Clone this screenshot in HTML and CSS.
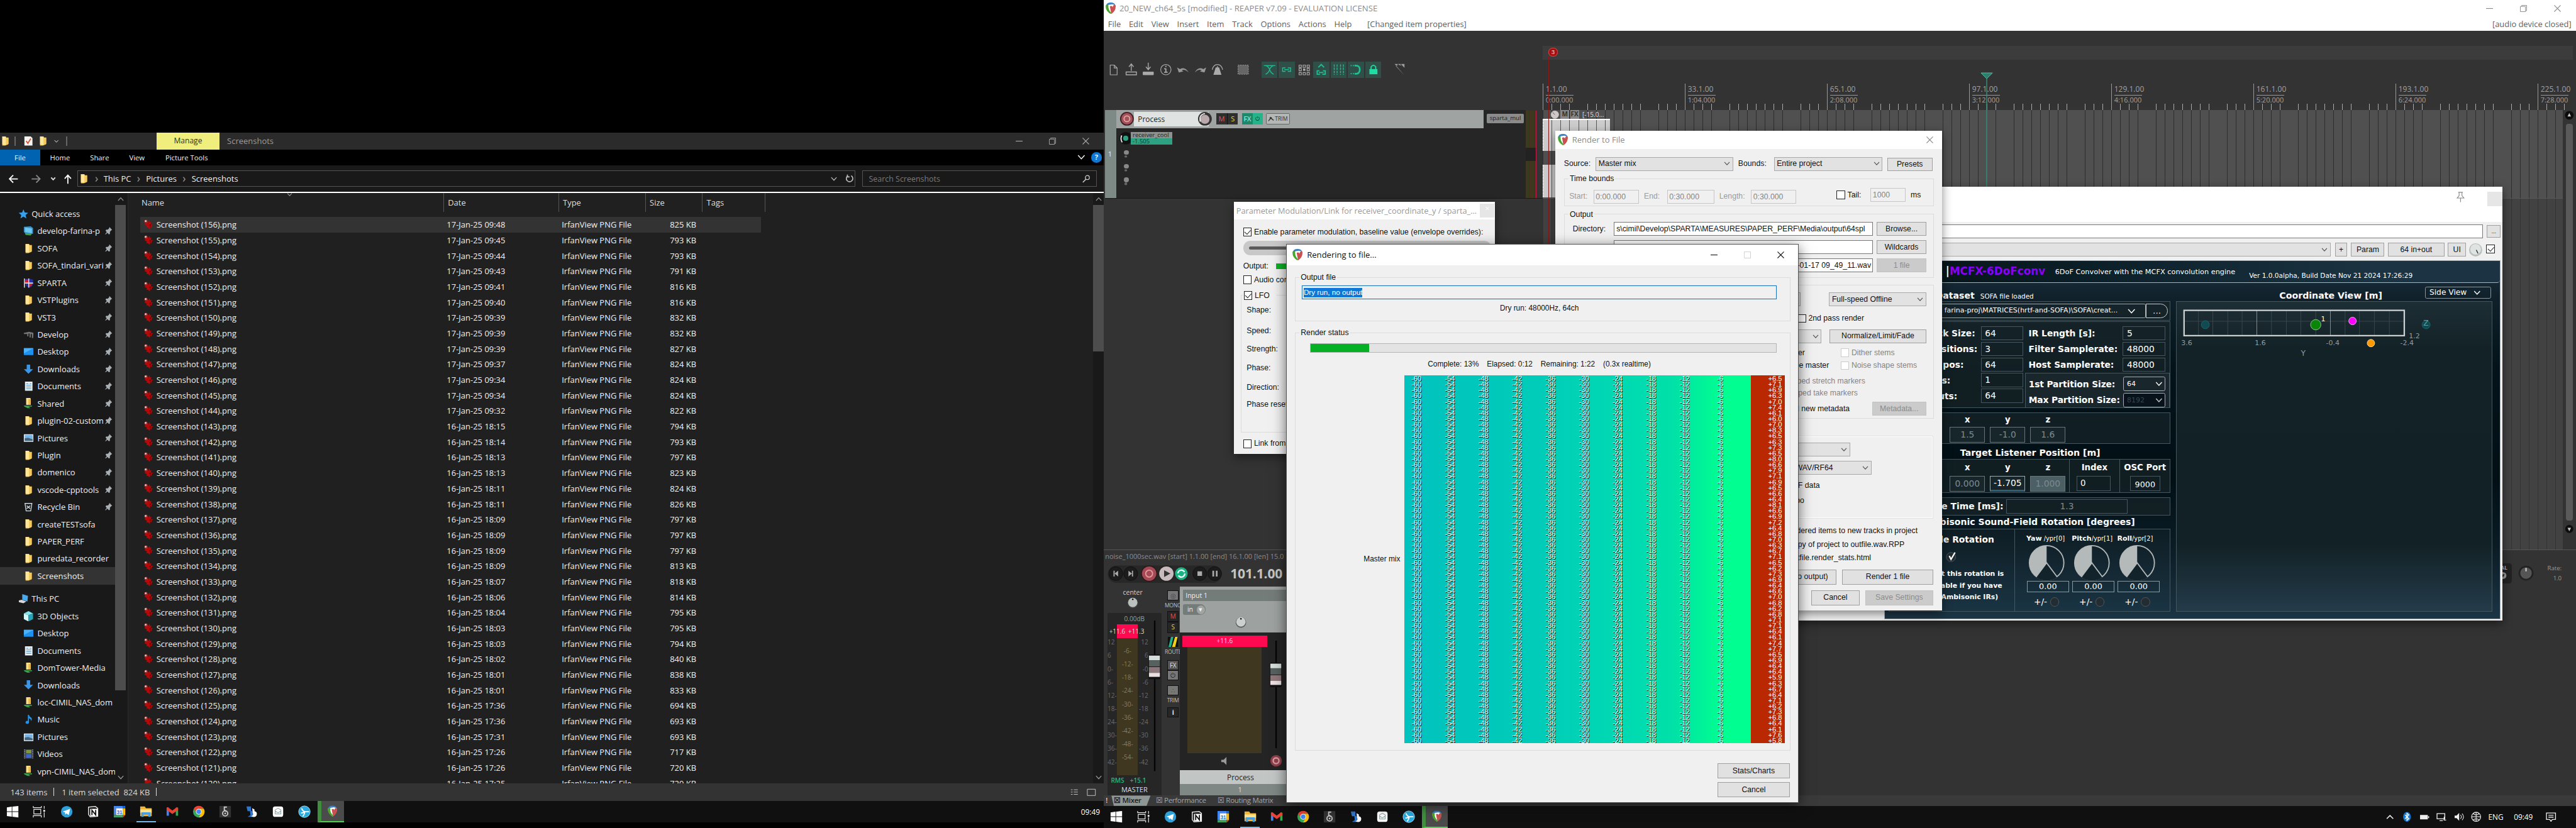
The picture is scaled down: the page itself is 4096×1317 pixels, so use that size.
FILE: index.html
```html
<!DOCTYPE html>
<html lang="en">
<head>
<meta charset="utf-8">
<title>Desktop</title>
<link rel="stylesheet" href="styles.css">
</head>
<body>
<svg class="sprite" width="0" height="0">
  <symbol id="reaper" viewBox="0 0 20 20"><path fill="#fff" d="M2 5Q10-3 18 5Q19 13 10 20Q1 13 2 5Z"/><path fill="#3b82c4" d="M1.500 6Q3 0 10 0Q17 0 18.500 6Q14 1.500 9.500 3.500Q5.500 3 4 7Z"/><path fill="#4aa52e" d="M1.500 5Q0 14 10 20L11 18Q5 12 6 5Q3 3 1.500 5Z"/><path fill="#c9504f" d="M18.500 5Q19.500 14 11 20L8.500 6.500Q13 5 13.500 8.500Q14 3 18.500 5Z"/></symbol>
  <symbol id="folder" viewBox="0 0 18 18"><path fill="#f5c95a" d="M4 1h6l1 2h4v11l-1 1-5 2H4z"/><path fill="#ffe69a" d="M4 1l6 1v14l-6-1z"/></symbol>
  <symbol id="netfolder" viewBox="0 0 18 18"><path fill="#ffe08a" d="M5 0h7l1 1v11H5z"/><path fill="#e8b84c" d="M9 2h4v10H9z"/><path fill="#38a149" d="M1 13h14v2H9l4 3H8l-6-3z"/></symbol>
  <symbol id="irfan" viewBox="0 0 18 18"><path fill="#b50808" d="M5 3L9 5 10 1 12 5 14 4 13 8 17 9 14 11 15 14 12 13 11 17 8 14 5 14 6 11 2 9z"/><path fill="#7a0404" d="M10 9l4-1-2 5z"/><circle cx="4.500" cy="3.500" r="3" fill="#a52a2a"/><circle cx="4" cy="3" r="1.500" fill="#ddd"/></symbol>
  <symbol id="star" viewBox="0 0 18 18"><path fill="#37a2ea" d="M9 1l2.300 5.700 6 .4-4.600 3.900 1.500 6L9 13.800 3.800 17l1.500-6L.7 7.100l6-.4z"/></symbol>
  <symbol id="desk" viewBox="0 0 18 18"><path fill="#1e90ee" d="M1 3h17v12H1z"/><path fill="#4cb1fa" d="M1 3h17L1 12z"/></symbol>
  <symbol id="down" viewBox="0 0 18 18"><path fill="#3a96e8" d="M6 1h6v8h5l-8 8-8-8h5z"/></symbol>
  <symbol id="doc" viewBox="0 0 18 18"><path fill="#eef3f7" d="M3 1h13v16H3z"/><path stroke="#3683b7" d="M5 4.500h4M5 7.500h9M5 10.500h9M5 13.500h9M11 4.500h3"/></symbol>
  <symbol id="check" viewBox="0 0 18 18"><path fill="#f4f4f4" d="M2 1h11l3 3v13H2z"/><path fill="none" stroke="#d2542c" stroke-width="2" d="M5 9l3 4 5-8"/></symbol>
  <symbol id="music" viewBox="0 0 18 18"><path fill="#1e96f0" d="M8 1h2q0 3 4 5 2 3-.5 6 0-4-3.500-5v7a3 2.500 0 1 1-2-2.200z"/></symbol>
  <symbol id="pics" viewBox="0 0 18 18"><path fill="#e9eef2" d="M1 3h17v13H1z"/><path fill="#79b6e6" d="M2.500 4.500h14v10h-14z"/><path fill="#42647b" d="M2.500 10l6-1 8 3v2.500h-14z"/></symbol>
  <symbol id="video" viewBox="0 0 18 18"><path fill="#3b3f4a" d="M1 1h17v16H1z"/><path fill="#7f9a35" d="M5 2h9v6H5z"/><path fill="#3d66c4" d="M5 9h9v7H5z"/><path stroke="#aaa" stroke-width="1.500" stroke-dasharray="1.500 1.500" d="M2.500 1v16M16.500 1v16"/></symbol>
  <symbol id="pc" viewBox="0 0 18 18"><path fill="#4aa9ec" d="M7 1l10 3-1 10-9-3z"/><path fill="#d9d9d9" d="M1 12l5-1 8 3-5 3-8-2z"/></symbol>
  <symbol id="cube" viewBox="0 0 18 18"><path fill="#7fe6ef" d="M9 0l8 4-8 3-8-3z"/><path fill="#d5f7f8" d="M1 4l8 3v11l-8-4z"/><path fill="#27a5b8" d="M17 4L9 7v11l8-4z"/></symbol>
  <symbol id="pcnet" viewBox="0 0 18 18"><path fill="#3a93c9" d="M1 2l12-1 4 3v10l-12 1-4-4z"/><path fill="#6cc7f3" d="M3 3l12 2v8L3 11z"/><path fill="#39a64a" d="M3 13l12 1-2 3-9-1z"/></symbol>
  <symbol id="shield" viewBox="0 0 18 18"><path fill="#2330a8" d="M3 2l7-1 7 2v8q-2 5-7 6-6-2-6-7z"/><path fill="#c23" d="M4 3h5v6H3zM10 9h6l-2 5-4 2z"/><path stroke="#eee" stroke-width="1.500" fill="none" d="M2 1v16M9.500 1v16M3 9h14"/></symbol>
  <symbol id="gear" viewBox="0 0 18 18"><path fill="#777" d="M1 6l9-2 8 2-1 9h-2V8h-2v6h-2V7h-2v5H7V8H1z"/></symbol>
  <symbol id="bin" viewBox="0 0 18 18"><path fill="none" stroke="#cfd8de" stroke-width="1.500" d="M3 3h12l-2 13H5zM6 7l6 5M12 7l-6 5"/></symbol>
  <symbol id="chev" viewBox="0 0 12 8"><path fill="none" stroke="currentColor" stroke-width="1.500" d="M1 1l5 5.500L11 1"/></symbol>
  <symbol id="cross" viewBox="0 0 12 12"><path stroke="currentColor" stroke-width="1.200" d="M.5.5l11 11M11.500.5l-11 11"/></symbol>
  <symbol id="mini" viewBox="0 0 12 12"><path stroke="currentColor" stroke-width="1.200" d="M0 6h12"/></symbol>
  <symbol id="rest" viewBox="0 0 12 12"><path stroke="currentColor" fill="none" d="M.5 2.500h9v9h-9zM3 2V.5h8.500V10H10"/></symbol>
  <symbol id="maxi" viewBox="0 0 12 12"><path stroke="currentColor" fill="none" d="M.5.5h11v11H.5z"/></symbol>
  <symbol id="t-win" viewBox="0 0 22 22"><path fill="#fff" d="M1 3.500L9.500 2.300V10.500H1zM10.500 2.200L21 1v9.500H10.500zM1 11.500h8.500v8.200L1 18.500zM10.500 11.500H21V21l-10.500-1.200z"/></symbol>
  <symbol id="t-task" viewBox="0 0 22 22"><path fill="none" stroke="#e8e8e8" stroke-width="1.300" d="M1 1v3h14V1M2 7h12v8H2zM1 21v-3h14v3M20 1v5M20 12v9"/><path fill="#fff" d="M18.500 8h3v3h-3z"/></symbol>
  <symbol id="t-tele" viewBox="0 0 22 22"><circle cx="11" cy="11" r="10" fill="#2ea0db"/><path fill="#fff" d="M4 11l13-5-2.500 11-4-3-2 2-.5-4z"/></symbol>
  <symbol id="t-notion" viewBox="0 0 22 22"><path fill="#111" stroke="#ddd" stroke-width="1.600" d="M3 3l12-1 4 3v14l-13 1-3-4z"/><path fill="#fff" d="M6 6h13v13H6z"/><path stroke="#111" fill="none" stroke-width="2" d="M9 17V8.500l6.500 8V8"/></symbol>
  <symbol id="t-cal" viewBox="0 0 22 22"><path fill="#4285f4" d="M1 1h16v4H5v12H1z"/><path fill="#fff" d="M5 5h12v12H5z"/><path fill="#fbbc04" d="M17 5h4v12h-4z"/><path fill="#1967d2" d="M17 1h4v4h-4z"/><path fill="#34a853" d="M1 17h16v4H1z"/><path fill="#ea4335" d="M17 17h4l-4 4z"/><text x="11" y="15" text-anchor="middle" class="cal-n">31</text></symbol>
  <symbol id="t-exp" viewBox="0 0 22 22"><path fill="#f2b632" d="M1 2h8l2 3h10v14H1z"/><path fill="#ffe08a" d="M1 7h20v6H1z"/><path fill="#4a9fe0" d="M3 12h16v8h-4v-4H7v4H3z"/></symbol>
  <symbol id="t-gmail" viewBox="0 0 22 22"><path fill="#4285f4" d="M1 4h4v14H1z"/><path fill="#34a853" d="M17 4h4v14h-4z"/><path fill="#ea4335" d="M1 4l2-1 8 6 8-6 2 2v3l-10 7L1 8z"/></symbol>
  <symbol id="t-chrome" viewBox="0 0 22 22"><circle cx="11" cy="11" r="10" fill="#34a853"/><path fill="#ea4335" d="M2.300 6A10 10 0 0 1 19.700 6H11L7 13.500z"/><path fill="#fbbc04" d="M19.700 6A10 10 0 0 1 11 21l4.300-7.500L13 6z"/><circle cx="11" cy="11" r="5" fill="#fff"/><circle cx="11" cy="11" r="4" fill="#4285f4"/></symbol>
  <symbol id="t-eight" viewBox="0 0 22 22"><path fill="#333" d="M1 1h20v20H1z"/><circle cx="11" cy="14" r="4.500" fill="none" stroke="#c9c9c9" stroke-width="2"/><circle cx="11" cy="14" r="1.500" fill="#c9c9c9"/><path stroke="#c9c9c9" stroke-width="2" fill="none" d="M14 3H9.500v5l4 3"/></symbol>
  <symbol id="t-hand" viewBox="0 0 22 22"><path fill="#2e77d0" d="M2 2h8v8H4zM8 8l5 3v9H4l5-3z"/><path fill="#fff" d="M12 5l4 2v3q5 1 4 6-1 5-7 4l-3-1q5-2 3-6z"/></symbol>
  <symbol id="t-box" viewBox="0 0 22 22"><rect x="2" y="2" width="18" height="18" rx="4" fill="#fff"/><path fill="none" stroke="#9aa" stroke-width="1.300" d="M11 5l5 3v7H6V8zM6 10l5 3 5-3"/></symbol>
  <symbol id="t-wave" viewBox="0 0 22 22"><circle cx="11" cy="11" r="10" fill="#29abe2"/><path fill="none" stroke="#fff" stroke-width="2" d="M6 5q2 5 5.500 6H19M11.500 11q0 5-3.500 8M5 13q3 1 6.500-2"/><circle cx="11" cy="11" r="10" fill="none" stroke="#b7e4f7"/></symbol>
  <g id="yprdial"><circle r="30" fill="none" stroke="#b4b9b9" stroke-width="2"/><path fill="#b4b9b9" d="M0 0V-30A30 30 0 0 0-18 24z"/><path fill="#12232c" d="M0 0L-18 25.500A31.500 31.500 0 0 0 18 25.500z"/><path stroke="#b4b9b9" stroke-width="2" fill="none" d="M-18 24L0 0L18 24"/></g>
  <g id="fadercap"><rect x="0" y="0" width="21" height="43" rx="3" fill="#111"/><rect x="1" y="2" width="19" height="8" fill="#d5dddb"/><rect x="1" y="10" width="19" height="11" fill="#56605e"/><rect x="1" y="22" width="19" height="10" fill="#8e777b"/><rect x="1" y="32" width="19" height="7" fill="#eadfe1"/></g>
</svg>

<main class="desktop">
  <!-- File explorer -->
  <section class="explorer">
    <header class="ex-title">
      <div class="ex-quick"><svg class="i18"><use href="#folder"/></svg><i></i><svg class="i18"><use href="#check"/></svg><svg class="i18"><use href="#folder"/></svg><svg class="i8"><use href="#chev"/></svg><i></i></div>
      <div class="ex-manage">Manage</div><div class="ex-name">Screenshots</div>
      <div class="ex-ctl"><svg><use href="#mini"/></svg><svg><use href="#rest"/></svg><svg><use href="#cross"/></svg></div>
    </header>
    <nav class="ex-tabs"><b>File</b><span>Home</span><span>Share</span><span>View</span><span class="pt">Picture Tools</span><em><svg><use href="#chev"/></svg><u>?</u></em></nav>
    <div class="ex-addr">
      <svg class="arrows" viewBox="0 0 134 45"><g fill="none" stroke-width="2"><path stroke="#fff" d="M31 22.500H17M23 16l-6.500 6.500L23 29"/><path stroke="#888" d="M55 22.500h14M63 16l6.500 6.500L63 29"/><path stroke="#ddd" d="M89 20l3.500 4 3.500-4"/><path stroke="#fff" d="M118 31V16M112.500 22l5.500-6 5.500 6"/></g></svg>
      <div class="crumbs"><svg class="i18"><use href="#folder"/></svg><s>›</s>This PC<s>›</s>Pictures<s>›</s>Screenshots<span class="cr-end"><svg class="cv"><use href="#chev"/></svg><svg class="rf" viewBox="0 0 16 16"><path fill="none" stroke="#bbb" stroke-width="2" d="M5 3a6 6 0 1 0 6 0M4 1v4h4"/></svg></span></div>
      <div class="search">Search Screenshots<svg viewBox="0 0 16 16"><circle cx="10" cy="5.500" r="4" fill="none" stroke="#ccc" stroke-width="1.600"/><path stroke="#ccc" stroke-width="2" d="M7 9l-6 6"/></svg></div>
    </div>
    <div class="ex-body">
      <aside class="ex-side">
        <ul class="tree">
          <li class="top"><svg><use href="#star"/></svg>Quick access</li>
          <li class="p"><svg><use href="#pcnet"/></svg>develop-farina-p</li>
          <li class="p"><svg><use href="#folder"/></svg>SOFA</li>
          <li class="p"><svg><use href="#folder"/></svg>SOFA_tindari_vari</li>
          <li class="p"><svg><use href="#shield"/></svg>SPARTA</li>
          <li class="p"><svg><use href="#folder"/></svg>VSTPlugins</li>
          <li class="p"><svg><use href="#folder"/></svg>VST3</li>
          <li class="p"><svg><use href="#gear"/></svg>Develop</li>
          <li class="p"><svg><use href="#desk"/></svg>Desktop</li>
          <li class="p"><svg><use href="#down"/></svg>Downloads</li>
          <li class="p"><svg><use href="#doc"/></svg>Documents</li>
          <li class="p"><svg><use href="#netfolder"/></svg>Shared</li>
          <li class="p"><svg><use href="#folder"/></svg>plugin-02-custom</li>
          <li class="p"><svg><use href="#pics"/></svg>Pictures</li>
          <li class="p"><svg><use href="#folder"/></svg>Plugin</li>
          <li class="p"><svg><use href="#folder"/></svg>domenico</li>
          <li class="p"><svg><use href="#folder"/></svg>vscode-cpptools</li>
          <li class="p"><svg><use href="#bin"/></svg>Recycle Bin</li>
          <li><svg><use href="#folder"/></svg>createTESTsofa</li>
          <li><svg><use href="#folder"/></svg>PAPER_PERF</li>
          <li><svg><use href="#folder"/></svg>puredata_recorder</li>
          <li class="sel"><svg><use href="#folder"/></svg>Screenshots</li>
          <li class="top pc"><svg><use href="#pc"/></svg>This PC</li>
          <li><svg><use href="#cube"/></svg>3D Objects</li>
          <li><svg><use href="#desk"/></svg>Desktop</li>
          <li><svg><use href="#doc"/></svg>Documents</li>
          <li><svg><use href="#netfolder"/></svg>DomTower-Media</li>
          <li><svg><use href="#down"/></svg>Downloads</li>
          <li><svg><use href="#netfolder"/></svg>loc-CIMIL_NAS_dom</li>
          <li><svg><use href="#music"/></svg>Music</li>
          <li><svg><use href="#pics"/></svg>Pictures</li>
          <li><svg><use href="#video"/></svg>Videos</li>
          <li><svg><use href="#netfolder"/></svg>vpn-CIMIL_NAS_dom</li>
        </ul>
        <div class="vbar"><svg class="up"><use href="#chev"/></svg><div class="thumb"></div><svg><use href="#chev"/></svg></div>
      </aside>
      <div class="files">
        <div class="cols"><span>Name</span><span>Date</span><span>Type</span><span>Size</span><span>Tags</span><svg><use href="#chev"/></svg></div>
        <div id="rows"></div>
      </div>
      <div class="vbar right"><svg class="up"><use href="#chev"/></svg><div class="thumb"></div><svg><use href="#chev"/></svg></div>
    </div>
    <footer class="ex-status"><span>143 items</span><i></i><span>1 item selected&nbsp; 824 KB</span><i></i><div><svg viewBox="0 0 16 16"><path stroke="#ccc" d="M2 3.500h3M7 3.500h7M2 7.500h3M7 7.500h7M2 11.500h3M7 11.500h7"/></svg><svg viewBox="0 0 16 16"><path fill="none" stroke="#ccc" d="M1 2.500h14v11H1z"/></svg></div></footer>
  </section>
  <div class="taskbar left">
    <svg><use href="#t-win"/></svg><svg><use href="#t-task"/></svg><svg><use href="#t-tele"/></svg><svg><use href="#t-notion"/></svg><svg><use href="#t-cal"/></svg><span class="open"><svg><use href="#t-exp"/></svg></span><svg><use href="#t-gmail"/></svg><svg><use href="#t-chrome"/></svg><svg><use href="#t-eight"/></svg><svg><use href="#t-hand"/></svg><svg><use href="#t-box"/></svg><svg><use href="#t-wave"/></svg><span class="act"><svg><use href="#reaper"/></svg></span>
    <div class="tray">09:49</div>
  </div>

  <!-- REAPER main window -->
  <section class="daw">
    <header class="daw-title"><svg class="i20"><use href="#reaper"/></svg><span>20_NEW_ch64_5s [modified] - REAPER v7.09 - EVALUATION LICENSE</span><div class="daw-ctl"><svg><use href="#mini"/></svg><svg><use href="#rest"/></svg><svg><use href="#cross"/></svg></div></header>
    <nav class="daw-menu"><span>File</span><span>Edit</span><span>View</span><span>Insert</span><span>Item</span><span>Track</span><span>Options</span><span>Actions</span><span>Help</span><span class="chg">[Changed item properties]</span><span class="aud">[audio device closed]</span></nav>
    <div class="daw-main">
      <div class="tcp">
        <div class="tools">
          <svg viewBox="0 0 28 28"><path fill="none" stroke="#aaa" stroke-width="1.300" d="M8 6h7l5 5v12H8zM15 6v5h5"/></svg>
          <svg viewBox="0 0 28 28"><path fill="none" stroke="#aaa" stroke-width="1.500" d="M5 18h18v5H5zM14 16V5M10 9l4-5 4 5"/></svg>
          <svg viewBox="0 0 28 28"><path fill="#aaa" stroke="#aaa" d="M5 18h18v5H5z"/><path fill="none" stroke="#aaa" stroke-width="1.500" d="M14 2v11M10 9l4 5 4-5"/></svg>
          <svg viewBox="0 0 28 28"><circle cx="14" cy="14" r="9" fill="none" stroke="#aaa" stroke-width="1.300"/><path stroke="#aaa" stroke-width="2" d="M14 12v6M11 12.500h3M11 18.500h6M13 8.500h2"/></svg>
          <svg viewBox="0 0 28 28"><path fill="#999" d="M4 10l3 9 8-2-3-2q5-3 12 4-6-11-15-6z"/></svg>
          <svg viewBox="0 0 28 28"><path fill="#999" d="M24 10l-3 9-8-2 3-2q-5-3-12 4 6-11 15-6z"/></svg>
          <svg viewBox="0 0 28 28"><path fill="none" stroke="#aaa" stroke-width="1.500" d="M5 14q2-9 9-9t9 9M14 8v8"/><path fill="#aaa" d="M11 10h6l4 13H7z"/></svg>
          <svg class="g1" viewBox="0 0 28 28"><path fill="#666" stroke="#aaa" stroke-dasharray="2 2" d="M5 6h18v16H5z"/></svg>
          <svg class="on g2" viewBox="0 0 28 28"><path fill="none" stroke="#1fbf93" stroke-width="1.400" d="M4 7h20M7 22q5-2 7-8t7-7M21 22q-5-2-7-8T7 7"/></svg>
          <svg class="on" viewBox="0 0 28 28"><path fill="none" stroke="#1fbf93" stroke-width="1.500" d="M12 11H7v6h5M16 11h5v6h-5M10 14h8"/></svg>
          <svg viewBox="0 0 28 28"><g fill="none" stroke="#aaa" stroke-width="1.300"><path d="M5 6h4v4H5zM12 6h4v4h-4zM19 6h4v4h-4zM5 12h4v4H5zM19 12h4v4h-4zM5 19h4v4H5zM12 19h4v4h-4zM19 19h4v4h-4z"/></g><path fill="#aaa" d="M12 12h4v4h-4z"/></svg>
          <svg class="on" viewBox="0 0 28 28"><path fill="none" stroke="#1fbf93" stroke-width="2" d="M9 10l5-5 5 5M11 16H7v6h5M17 16h4v6h-5M10 19h8"/></svg>
          <svg class="on" viewBox="0 0 28 28"><path stroke="#1fbf93" stroke-width="1.500" stroke-dasharray="4 1.500" d="M6 5v18M11 5v18M17 5v18M22 5v18"/></svg>
          <svg class="on" viewBox="0 0 28 28"><path fill="none" stroke="#1fbf93" stroke-width="3" d="M12 7q9-1 9 7t-9 7"/><path stroke="#1fbf93" stroke-width="2" stroke-dasharray="2 2" d="M5 7h6M5 21h6"/></svg>
          <svg class="on" viewBox="0 0 28 28"><path fill="#1fdca5" d="M7 13h14v9H7z"/><path fill="none" stroke="#1fdca5" stroke-width="2" d="M10 13V9q4-5 8 0v4"/></svg>
          <svg class="g3" viewBox="0 0 28 28"><path fill="#aaa" d="M3 4h18v4zM6 8l15 16V11L12 4zM21 4v20L4 4z" opacity=".9"/><path stroke="#333" stroke-width="1.200" d="M9 4l12 14M14 4l7 8"/></svg>
        </div>
        <div class="track">
          <div class="t-strip">1</div>
          <div class="t-main">
            <div class="t-bar"><svg class="rec" viewBox="0 0 26 26"><circle cx="13" cy="13" r="12" fill="#3a2226"/><circle cx="13" cy="13" r="10" fill="#a65058"/><circle cx="13" cy="13" r="5" fill="none" stroke="#e0a8ac" stroke-width="2"/></svg><div class="t-name">Process</div><svg class="rec kn" viewBox="0 0 26 26"><circle cx="13" cy="13" r="12" fill="#333"/><circle cx="13" cy="14" r="8" fill="#b9a9ab"/><path fill="none" stroke="#eee" stroke-width="2" d="M5 18Q2 6 13 4"/></svg><b class="m">M</b><b class="s">S</b><b class="fx">FX</b><b class="pw">⏻</b><b class="tr"><svg viewBox="0 0 12 10"><path fill="none" stroke="#333" stroke-width="1.500" d="M1 8l4-5 5 4"/><circle cx="5" cy="3" r="2" fill="#333"/></svg>TRIM</b></div>
            <div class="t-param"><svg viewBox="0 0 24 24"><circle cx="12" cy="12" r="11" fill="#111"/><circle cx="12" cy="12" r="4.500" fill="#2fa183"/><path fill="none" stroke="#eee" stroke-width="2" d="M6 19Q2 14 5 7"/></svg><div><span>receiver_cool</span><span>-1.505</span></div></div>
            <div class="t-dots"><i></i><i></i><i></i></div>
          </div>
          <div class="t-fx"><span>sparta_mul</span></div>
          <div class="t-meter"></div>
        </div>
      </div>
      <div class="arrange">
        <div class="regions"><b>3</b></div>
        <div class="ruler"><div><p>1.1.00</p><p>0:00.000</p></div><div><p>33.1.00</p><p>1:04.000</p></div><div><p>65.1.00</p><p>2:08.000</p></div><div><p>97.1.00</p><p>3:12.000</p></div><div><p>129.1.00</p><p>4:16.000</p></div><div><p>161.1.00</p><p>5:20.000</p></div><div><p>193.1.00</p><p>6:24.000</p></div><div class="last"><p>225.1.00</p><p>7:28.000</p></div></div>
        <div class="lanes">
          <div class="lane-wrap"><div class="lane"><div class="item-h"><svg viewBox="0 0 16 16"><circle cx="8" cy="8" r="7" fill="#cfc8c9"/><path stroke="#555" d="M8 8L4 4"/></svg><b>M</b><b>FX</b>[-15.0...</div><div class="item"></div><div class="item two"></div></div><div class="lane low"></div></div>
          <div class="a-scroll"><svg viewBox="0 0 16 16"><circle cx="8" cy="8" r="7.500" fill="#0c0c0c"/><path fill="#ccc" d="M8 4l3 6H5z"/></svg><div></div><svg viewBox="0 0 16 16"><circle cx="8" cy="8" r="7" fill="#0c0c0c"/><path fill="#ccc" d="M8 12l3-6H5z"/></svg></div>
        </div>
        <div class="mark-red"></div><svg class="mark-cur" viewBox="0 0 22 720"><path fill="#2c7f6d" stroke="#5ec0a8" d="M1 1h20L11 11z"/><path stroke="#2f9a80" stroke-width="1.500" d="M11 10v710"/></svg>
      </div>
    </div>
    <div class="dock">
      <div class="d-info">noise_1000sec.wav [start] 1.1.00 [end] 16.1.00 [len] 15.0</div>
      <div class="d-right"><div class="global"><b>GLOBAL</b><svg viewBox="0 0 20 14"><circle cx="13" cy="7" r="6" fill="#9a9a9a"/><path fill="#222" d="M10 5h6l-3 5z"/></svg></div><svg class="rk" viewBox="0 0 34 34"><circle cx="17" cy="17" r="13" fill="#222"/><circle cx="17" cy="17" r="10" fill="#555"/><path stroke="#ddd" stroke-width="2" d="M17 8v6"/></svg><div class="rate"><span>Rate:</span><span>1.0</span></div></div>
      <svg class="transport" viewBox="0 0 317 41">
        <rect x="7" y="5" width="198" height="30" rx="15" fill="#272727"/>
        <g fill="#1c1c1c" stroke="#0f0f0f"><circle cx="21" cy="19" r="12"/><circle cx="47" cy="19" r="12"/><circle cx="167" cy="19" r="12"/><circle cx="193" cy="19" r="12"/></g>
        <path fill="#aaa" d="M17 14h2v10h-2zM25 14v10l-6-5zM43 14v10l6-5zM49 14h2v10h-2zM163 15h8v8h-8zM189 14h3v10h-3zM195 14h3v10h-3z"/>
        <circle cx="79" cy="19" r="14" fill="#2a1719"/><circle cx="79" cy="19" r="12.500" fill="#a54a54"/><circle cx="79" cy="19" r="6" fill="none" stroke="#e29aa0" stroke-width="2"/>
        <circle cx="109" cy="19" r="14" fill="#222"/><circle cx="109" cy="19" r="12.500" fill="#c8babd"/><path fill="#333" d="M105 13l11 6-11 6z"/>
        <circle cx="135" cy="19" r="11" fill="#18b583"/><circle cx="135" cy="19" r="6" fill="none" stroke="#fff" stroke-width="2.500" stroke-dasharray="15 4"/>
        <text x="220" y="27" class="pos" textLength="91">101.1.00</text>
      </svg>
      <div class="mixer">
        <div class="master">
          <div class="m-pan">center<svg viewBox="0 0 22 22"><circle cx="11" cy="11" r="10" fill="#444"/><circle cx="11" cy="10" r="9" fill="#b9c0bd"/><circle cx="11" cy="4" r="1.500" fill="#111"/></svg></div>
          <div class="m-box">
            <div class="m-db">0.00dB</div>
            <div class="m-cols">
              <div class="scale l"><span>12</span><span>6</span><span>0-</span><span>6-</span><span>12-</span><span>18-</span><span>24-</span><span>30-</span><span>36-</span><span>42-</span></div>
              <div class="bar"><p><span>+11.6</span><span>+11.3</span></p><span>-6-</span><span>-12-</span><span>-18-</span><span>-24-</span><span>-30-</span><span>-36-</span><span>-42-</span><span>-48-</span><span>-54-</span></div>
              <div class="scale r"><span>12</span><span>6</span><span>-0</span><span>-6</span><span>-12</span><span>-18</span><span>-24</span><span>-30</span><span>-36</span><span>-42</span></div>
              <svg class="fader" viewBox="0 0 22 262"><path stroke="#050505" stroke-width="2.500" d="M11 0v262"/><use href="#fadercap" y="59"/></svg>
            </div>
            <div class="m-rms"><span>RMS</span><span>+15.1</span></div><div class="m-name">MASTER</div>
          </div>
        </div>
        <div class="m-btns"><b class="g">◎</b><span>MONO</span><b class="m">M</b><b class="s">S</b><svg viewBox="0 0 20 20"><path fill="#111" d="M0 0h20v20H0z"/><path fill="#1bb489" d="M6 0h5L6 20H1z"/><path fill="#f0d01e" d="M14 0h5l-5 20H8z"/></svg><span>ROUTE</span><b class="f">FX</b><b class="f2">⏻</b><b class="g tr2">∴</b><span>TRIM</span><b class="i">i</b></div>
        <div class="chan">
          <div class="c-top"><div class="c-in">Input 1</div><div class="c-mon">in <i>▾</i></div><svg viewBox="0 0 22 22"><circle cx="11" cy="11" r="10" fill="#555"/><circle cx="11" cy="10" r="9" fill="#ccd1cf"/><circle cx="11" cy="4" r="1.500" fill="#111"/></svg></div>
          <div class="c-mid"><div class="c-meter"><div class="pk">+11.6</div><div class="br"></div><svg viewBox="0 0 12 14"><path fill="#999" d="M1 5h4l5-5v14L5 9H1z"/></svg></div><svg class="c-fader" viewBox="0 0 22 220"><path stroke="#050505" stroke-width="2.500" d="M11 0v187"/><use href="#fadercap" y="38"/><circle cx="11" cy="209" r="10" fill="#8e3f49"/><circle cx="11" cy="209" r="5" fill="none" stroke="#d99aa0" stroke-width="2.500"/></svg></div>
          <div class="c-name">Process</div><div class="c-num">1</div>
        </div>
      </div>
      <div class="tabs"><em>!</em><span class="cur">☒ Mixer</span><span>☒ Performance</span><span>☒ Routing Matrix</span></div>
    </div>
  </section>

  <div class="taskbar right2">
    <svg><use href="#t-win"/></svg><svg><use href="#t-task"/></svg><svg><use href="#t-tele"/></svg><svg><use href="#t-notion"/></svg><svg><use href="#t-cal"/></svg><span class="open"><svg><use href="#t-exp"/></svg></span><svg><use href="#t-gmail"/></svg><svg><use href="#t-chrome"/></svg><svg><use href="#t-eight"/></svg><svg><use href="#t-hand"/></svg><svg><use href="#t-box"/></svg><svg><use href="#t-wave"/></svg><span class="act"><svg><use href="#reaper"/></svg></span>
    <div class="tray">
      <svg class="tv" viewBox="0 0 16 16"><path fill="none" stroke="#eee" stroke-width="1.500" d="M3 11l5-5 5 5"/></svg>
      <svg viewBox="0 0 16 16"><ellipse cx="8" cy="8" rx="6" ry="7.500" fill="#1277d3"/><path fill="none" stroke="#fff" stroke-width="1.300" d="M5 5l6 6-3 2.500v-11L11 5l-6 6"/></svg>
      <svg viewBox="0 0 16 16"><path fill="#eee" d="M1 5h12v7H1zM13.500 7H15v3h-1.500z"/></svg>
      <svg viewBox="0 0 16 16"><path fill="none" stroke="#eee" stroke-width="1.300" d="M1 3h12v8H1zM5 14h5M12 8v5h3"/></svg>
      <svg viewBox="0 0 16 16"><path fill="#eee" d="M1 6h3l4-4v12l-4-4H1z"/><path fill="none" stroke="#eee" d="M10 5q3 3 0 6M12.500 3q4.500 5 0 10"/></svg>
      <svg viewBox="0 0 16 16"><circle cx="8" cy="8" r="7" fill="none" stroke="#ddd" stroke-width="1.300"/><path stroke="#ddd" stroke-width="1.200" fill="none" d="M1 8h14M8 1v14M3 3q5 4 10 0M3 13q5-4 10 0"/></svg>
      <span>ENG</span><span class="clk">09:49</span>
      <svg class="nt" viewBox="0 0 16 16"><path fill="none" stroke="#eee" stroke-width="1.300" d="M1 2h14v10h-5l-2 3-2-3H1zM4 5.500h8M4 8.500h8"/></svg>
    </div>
  </div>

  <!-- Plug-in window -->
  <section class="fxwin win">
    <div class="fw-head"><svg class="fpin" viewBox="0 0 14 18"><path fill="none" stroke="#888" stroke-width="1.200" d="M3 1h8M4.500 1v6L1 11h12L9.500 7V1M7 11v7"/></svg><i class="ghost"></i></div>
    <div class="fw-r1"><div class="box"></div><button class="btn">...</button></div>
    <div class="fw-r2"><div class="combo"><svg><use href="#chev"/></svg></div><button class="btn add">+</button><button class="btn par">Param</button><button class="btn pins">64 in+out</button><button class="btn ui">UI</button><svg class="dial" viewBox="0 0 24 24"><circle cx="12" cy="12" r="11" fill="#b9bfbc"/><circle cx="12" cy="11" r="9" fill="#dfe3e1"/><path stroke="#222" stroke-width="1.300" d="M13 12l3 6"/></svg><i class="cb on"></i></div>
    <div class="plug">
      <header class="pl-head"><h1><span>SPARTA |</span>MCFX-6DoFconv</h1><p class="pl-sub">6DoF Convolver with the MCFX convolution engine</p><p class="pl-ver">Ver 1.0.0alpha, Build Date Nov 21 2024 17:26:29</p></header>
      <div class="pl-body">
        <div class="pl-left">
          <div class="pl-ds"><b>SOFA Dataset</b><span>SOFA file loaded</span></div>
          <div class="panel path"><div>farina-proj\MATRICES(hrtf-and-SOFA)\SOFA\creat...<svg><use href="#chev"/></svg></div><button>...</button></div>
          <div class="panel info">
            <div class="in-l"><b>Host Block Size:</b><i>64</i><b class="e1">N. Positions:</b><i>3</i><b class="e2">IRs per pos:</b><i>64</i><b class="e3">Inputs:</b><i>1</i><b class="e4">Outputs:</b><i>64</i></div>
            <div class="in-r"><div class="in-r1"><b>IR Length [s]:</b><i>5</i><b>Filter Samplerate:</b><i>48000</i><b>Host Samplerate:</b><i>48000</i></div>
            <div class="in-r2"><b>1st Partition Size:</b><i>64<svg><use href="#chev"/></svg></i><b>Max Partition Size:</b><i class="off">8192<svg><use href="#chev"/></svg></i></div></div>
          </div>
          <div class="panel xyz src"><b>x</b><b>y</b><b>z</b><i>1.5</i><i>-1.0</i><i>1.6</i></div>
          <h2 class="tlp">Target Listener Position [m]</h2>
          <div class="panel tgt"><div class="xyz"><b>x</b><b>y</b><b>z</b><i>0.000</i><i class="hot">-1.705</i><i class="dim">1.000</i></div><div class="idx"><b>Index</b><i>0</i></div><div class="osc"><b>OSC Port</b><i>9000</i></div></div>
          <div class="panel time"><b>Crossfade Time [ms]:</b><i>1.3</i></div>
          <h2 class="rot">Ambisonic Sound-Field Rotation [degrees]</h2>
          <div class="panel rotp">
            <div class="r-l"><b>Enable Rotation</b><svg viewBox="0 0 20 20"><circle cx="9" cy="11" r="8" fill="#222d31" stroke="#556"/><path fill="none" stroke="#fff" stroke-width="2.500" d="M6 9l3 6 7-12"/></svg><p><span>(Note that this rotation is</span><span class="n2">suitable if you have</span><span class="n3">Ambisonic IRs)</span></p></div>
            <div class="r-r">
              <div><p><b>Yaw</b> /ypr[0]</p><svg viewBox="-32 -32 64 64"><use href="#yprdial"/></svg><i>0.00</i><span>+/-<u></u></span></div>
              <div><p><b>Pitch</b>/ypr[1]</p><svg viewBox="-32 -32 64 64"><use href="#yprdial"/></svg><i>0.00</i><span>+/-<u></u></span></div>
              <div><p><b>Roll</b>/ypr[2]</p><svg viewBox="-32 -32 64 64"><use href="#yprdial"/></svg><i>0.00</i><span>+/-<u></u></span></div>
            </div>
          </div>
        </div>
        <div class="pl-right">
          <div class="cv-head"><h2>Coordinate View [m]</h2><div class="side">Side View<svg><use href="#chev"/></svg></div></div>
          <div class="panel coord"><svg viewBox="0 0 550 540">
            <g stroke="#3b494e" stroke-width="1"><path d="M39 16v44M64 16v44M90 16v44M115 16v44M166 16v44M192 16v44M217 16v44M243 16v44M294 16v44M319 16v44M345 16v44M371 16v44M14 35h382"/></g><path stroke="#8b9599" d="M140.500 16v44M268.500 16v44"/>
            <path fill="none" stroke="#ccd2d4" stroke-width="2.500" d="M14 16h383v44H14z"/>
            <circle cx="51" cy="41" r="7" fill="#0f4b50" stroke="#1f666b"/><circle cx="243" cy="41" r="9" fill="#0a850a" stroke="#8fd08f"/><circle cx="307" cy="34.500" r="6.500" fill="#f0f" stroke="#fbf"/><circle cx="339" cy="73" r="6.500" fill="#f90" stroke="#fd9"/><circle cx="435" cy="41" r="7" fill="#0f4b50" stroke="#1f666b"/>
            <g class="ax"><text x="9" y="77">3.6</text><text x="137" y="77">1.6</text><text x="261" y="77">-0.4</text><text x="390" y="77">-2.4</text><text x="405" y="64">1.2</text><text x="217" y="95" class="lg">Y</text><text x="430" y="43" class="lg z">Z</text><text x="252" y="35" class="wh">1</text></g>
          </svg></div>
        </div>
      </div>
    </div>
  </section>

  <!-- Render settings dialog -->
  <section class="rdlg win">
    <header><svg class="i20"><use href="#reaper"/></svg>Render to File<svg class="x"><use href="#cross"/></svg></header>
    <div class="row r-src"><span>Source:</span><div class="combo">Master mix<svg><use href="#chev"/></svg></div><span class="bd">Bounds:</span><div class="combo c2">Entire project<svg><use href="#chev"/></svg></div><button class="btn">Presets</button></div>
    <fieldset class="f-time"><legend>Time bounds</legend><div class="row"><span class="w1">Start:</span><div class="in w2">0:00.000</div><span class="w3">End:</span><div class="in w4">0:30.000</div><span class="w5">Length:</span><div class="in w6">0:30.000</div><i class="cb"></i><span class="tail">Tail:</span><div class="in w7">1000</div><span class="ms">ms</span></div></fieldset>
    <fieldset class="f-out"><legend>Output</legend>
      <div class="row"><span>Directory:</span><div class="in live">s\cimil\Develop\SPARTA\MEASURES\PAPER_PERF\Media\output\64spl</div><button class="btn">Browse...</button></div>
      <div class="row"><span>File name:</span><div class="in live"></div><button class="btn">Wildcards</button></div>
      <div class="row"><span>Render to:</span><div class="in live end">2025-01-17 09_49_11.wav</div><button class="btn off">1 file</button></div>
    </fieldset>
    <fieldset class="f-opt"><legend>Options</legend>
      <div class="row o1"><div class="combo a"><svg><use href="#chev"/></svg></div><div class="combo b">Full-speed Offline<svg><use href="#chev"/></svg></div></div>
      <div class="row o2"><i class="cb"></i><span>2nd pass render</span></div>
      <div class="row o3"><div class="combo"><svg><use href="#chev"/></svg></div><button class="btn">Normalize/Limit/Fade</button></div>
      <div class="row o4"><span>Dither master</span><i class="cb off"></i><span class="g">Dither stems</span></div>
      <div class="row o5"><span>Noise shape master</span><i class="cb off"></i><span class="g">Noise shape stems</span></div>
      <div class="row o6 g">Embed snapped stretch markers</div>
      <div class="row o7 g">Embed snapped take markers</div>
      <div class="row o8"><span>Add new metadata</span><button class="btn off">Metadata...</button></div>
    </fieldset>
    <div class="fmt"><div class="combo"><svg><use href="#chev"/></svg></div><div class="combo b">Auto WAV/RF64<svg><use href="#chev"/></svg></div><p>Write BWF data</p><p class="q">Embed tempo</p></div>
    <p class="l1">Add rendered items to new tracks in project</p><p class="l2">Save copy of project to outfile.wav.RPP</p><p class="l3">Save outfile.render_stats.html</p>
    <div class="row acts a1"><button class="btn">Dry run (no output)</button><button class="btn">Render 1 file</button></div>
    <div class="row acts a2"><button class="btn">Cancel</button><button class="btn off">Save Settings</button></div>
  </section>

  <!-- Parameter modulation -->
  <section class="pmod win">
    <header><span>Parameter Modulation/Link for receiver_coordinate_y / sparta_...</span><i class="ghost">×</i></header>
    <div class="pr p1"><i class="cb on"></i>Enable parameter modulation, baseline value (envelope overrides):</div>
    <div class="slider"><i></i></div>
    <div class="pr p3">Output:<i class="grn"></i></div>
    <div class="pr p4"><i class="cb"></i>Audio control signal (sidechain)</div>
    <fieldset><legend><i class="cb on"></i>LFO</legend><p>Shape:</p><p class="s2">Speed:</p><p class="s3">Strength:</p><p class="s3">Phase:</p><p class="s4">Direction:</p><p class="s5">Phase reset:</p></fieldset>
    <div class="pr p6"><i class="cb"></i>Link from MIDI or FX parameter</div>
  </section>

  <!-- Render progress -->
  <section class="prog win">
    <header><svg class="i20"><use href="#reaper"/></svg>Rendering to file...<div><svg><use href="#mini"/></svg><svg class="dis"><use href="#maxi"/></svg><svg><use href="#cross"/></svg></div></header>
    <fieldset class="g1"><legend>Output file</legend><div class="path1"><mark>Dry run, no output</mark></div><p>Dry run: 48000Hz, 64ch</p></fieldset>
    <fieldset class="g2"><legend>Render status</legend><div class="pbar"><i></i></div><p><span>Complete: 13%</span><span>Elapsed: 0:12</span><span>Remaining: 1:22</span><span>(0.3x realtime)</span></p>
      <div class="meters"><label>Master mix</label><div id="meters"></div></div></fieldset>
    <div class="btns"><button class="btn">Stats/Charts</button><button class="btn">Cancel</button></div>
  </section>
</main>
<script src="script.js"></script>
</body>
</html>
```
FILE: styles.css
```css
*{box-sizing:border-box}
html,body{margin:0;background:#000;overflow:hidden}
body{zoom:.91428}
p,h1,h2,ul{margin:0;padding:0}
i,em{font-style:normal}
u,s{text-decoration:none}
button{font:inherit;margin:0;padding:0}
.sprite{position:absolute}
.cal-n{font:bold 9px "Liberation Sans",sans-serif;fill:#1a73e8}
.desktop{position:relative;width:4480px;height:1440px;background:#000;overflow:hidden;font:14.2px "Open Sans","Noto Sans",sans-serif}
.i18{width:18px;height:18px}.i20{width:20px;height:20px}.i8{width:8px;height:6px}

/* explorer */
.explorer{position:absolute;left:0;top:231px;width:1920px;height:1162px;background:#191919;color:#f0f0f0}
.ex-title{height:29px;background:#2b2b2b;display:flex;align-items:center}
.ex-quick{width:272px;display:flex;align-items:center;color:#eee}
.ex-quick i{width:2px;height:17px;background:#666;margin:0 14px 0 7px}
.ex-quick .i18+.i18{margin-left:7px}.ex-quick .i8{margin-left:10px}.ex-quick .i8+i{margin-left:13px}
.ex-manage{width:110px;height:29px;background:#f0ef7d;color:#33331a;text-align:center;line-height:28px;font-size:13.2px}
.ex-name{color:#9b9b9b;margin-left:13px;font-size:14.2px}
.ex-ctl{margin-left:auto;display:flex;gap:46px;margin-right:26px;color:#aaa}
.ex-ctl svg{width:12px;height:12px}
.ex-tabs{height:28px;background:#000;display:flex;align-items:center;font-size:12.3px}
.ex-tabs b{width:70px;height:28px;line-height:28px;background:#0063b1;text-align:center;font-weight:400;margin-right:17px}
.ex-tabs span{margin-right:35px}
.ex-tabs .pt{margin-left:1px}
.ex-tabs em{margin-left:auto;display:flex;align-items:center;gap:10px;margin-right:4px}
.ex-tabs em svg{width:14px;height:9px}
.ex-tabs u{width:18px;height:18px;border-radius:9px;background:#0f78d4;text-align:center;line-height:18px;font-weight:700}
.ex-addr{height:48px;display:flex;align-items:center;border-bottom:3px solid #fff}
.arrows{width:134px;height:45px}
.crumbs{width:1354px;height:28px;border:1px solid #535353;display:flex;align-items:center;padding-left:2px}
.crumbs s{color:#999;width:26px;text-align:center;font-size:19px;line-height:20px;padding-bottom:3px}
.crumbs s:nth-of-type(1){width:24px;margin-left:1px}
.cr-end{margin-left:auto;display:flex;align-items:center;gap:14px;margin-right:2px;color:#bbb}
.cr-end .cv{width:11px;height:8px}.cr-end .rf{width:15px;height:15px}
.search{margin-left:12px;width:408px;height:28px;border:1px solid #535353;display:flex;align-items:center;justify-content:space-between;padding:0 11px 0 10px;color:#7a7a7a;font-size:13.6px}
.search svg{width:14px;height:14px}
.ex-body{height:1027px;display:flex;overflow:hidden}
.ex-side{width:223px;border-right:2px solid #2c2c2c;display:flex}
.tree{width:200px;list-style:none;padding-top:21px;overflow:hidden}
.tree li{height:30px;display:flex;align-items:center;padding-left:40px;white-space:nowrap;overflow:hidden;position:relative}
.tree svg{width:18px;height:18px;flex:none;margin-right:7px}
.tree .top{padding-left:32px}.tree .top svg{margin-right:5px}
.tree .pc{margin-top:10px}
.tree .sel{background:#333}
.tree .p::after{content:"";position:absolute;right:5px;top:8px;width:12px;height:13px;background:#a9b0b4;clip-path:polygon(60% 0,100% 40%,85% 45%,68% 65%,68% 90%,55% 100%,32% 78%,5% 100%,0 95%,22% 68%,5% 48%,15% 35%,38% 36%,58% 16%)}
.vbar{width:19px;display:flex;flex-direction:column;align-items:center;color:#999}
.vbar svg{width:11px;height:8px;margin:6px 0 7px}.vbar .up{transform:scaleY(-1)}
.vbar .thumb{width:19px;height:844px;background:#4d4d4d}
.vbar svg:last-child{margin:auto 0 6px}
.vbar.right .thumb{height:254px}
.files{flex:1;background:#202020;padding-left:16px;overflow:hidden}
.cols{display:grid;grid-template-columns:533px 200px 151px 99px 109px;height:33px;line-height:33px;position:relative;color:#dedede}
.cols span{padding-left:7px;border-right:1px solid #555}
.cols svg{position:absolute;left:260px;top:0;width:10px;height:6px;color:#999}
.file{display:grid;grid-template-columns:22px 505px 200px 136px 98px;height:27px;align-items:center;margin-left:5px;width:1080px;padding-left:6px}
.file svg{width:18px;height:18px;margin-left:-1px}
.file span:last-child{text-align:right}
.file.sel{background:#333}
#rows{padding-top:8.500px}
.ex-status{height:30px;background:#333;display:flex;align-items:center;padding-left:18px;color:#d8d8d8}
.ex-status i{width:1px;height:14px;background:#ddd;margin:0 13px 0 11px}
.ex-status div{margin-left:auto;display:flex;gap:14px;margin-right:14px}
.ex-status svg{width:16px;height:16px}

/* taskbars */
.taskbar{position:absolute;height:38px;background:#101010;display:flex;align-items:center;padding-left:11px;color:#fff;font-size:13px}
.taskbar.left{left:0;top:1393px;width:1920px}
.taskbar.right2{left:1920px;top:1402px;width:2560px}
.taskbar>svg{width:22px;height:22px;margin-right:24px;flex:none}
.taskbar>svg:nth-child(2){margin-right:26px}
.taskbar .open{width:34px;height:38px;margin:0 18px 0 -6px;border-bottom:3px solid #76b9ed;display:flex;justify-content:center;padding-top:8px}
.taskbar .open svg{width:22px;height:22px}
.taskbar .act{width:45px;height:38px;border-left:7px solid #3f8f3f;border-bottom:3px solid #4fd24f;background:#4b4b4b;display:flex;justify-content:center;align-items:center;margin-left:-12px}
.taskbar .act svg{width:19px;height:20px}
.tray{margin-left:auto;display:flex;align-items:center;margin-right:7px;gap:9px}
.tray svg{width:18px;height:18px}
.right2 .tray{margin-right:34px;gap:12px}
.tray .clk{margin:0 11px 0 6px}

/* main DAW window */
.daw{position:absolute;left:1920px;top:0;width:2560px;height:1402px;background:#333;overflow:hidden}
.daw-title{height:29px;background:#fff;display:flex;align-items:center;color:#8b8b8b;padding-left:2px;font-size:14.4px}
.daw-title span{margin-left:5px}
.daw-ctl{margin-left:auto;display:flex;gap:47px;margin-right:26px;color:#888}.daw-ctl svg{width:12px;height:12px}
.daw-menu{height:25px;background:#fff;display:flex;align-items:center;color:#5e5e5e;padding-left:7px;font-size:14.1px}
.daw-menu span{margin-right:14px}.daw-menu .chg{margin-left:13px}.daw-menu .aud{margin-left:auto;margin-right:8px}
.daw-main{display:flex;height:902px}
.tcp{width:763px;flex:none}
.tools{height:137px;display:flex;align-items:center;padding:0 0 2px 3px}
.tools svg{width:28px;height:28px;margin-right:2.100px;flex:none}
.tools .on{background:#2f4f48}.tools .g1{margin-left:15px}.tools .g2{margin-left:15px}.tools .g3{margin-left:17px}
.track{display:flex;height:155px;margin-left:2px;border-bottom:2px solid #191919}
.t-strip{width:19px;background:#7e8a86;color:#eee;font-size:12px;display:flex;align-items:center;padding-left:5px}
.t-main{width:639px;background:#262626}
.t-bar{height:32px;background:#9fa4a2;display:flex;align-items:center;padding-left:6px;font-size:13px;color:#222}
.rec{width:26px;height:26px}
.t-name{background:#dfe3e2;height:25px;line-height:25px;width:130px;padding-left:7px;margin-left:-1px}
.kn{margin-left:-19px;margin-right:6px}
.t-bar b{font:12px/20px "Open Sans",sans-serif;height:20px;text-align:center;background:#2f2f2f}
.t-bar .m{width:19px;color:#e05561}.t-bar .s{width:19px;color:#e6d64a;border-left:1px solid #111}
.t-bar .fx{width:19px;background:#1c8a6a;color:#bff0e0;margin-left:7px}.t-bar .pw{width:17px;background:#25b48a;color:#0d4030;font-size:10px;overflow:hidden}
.t-bar .tr{width:41px;margin-left:6px;background:#b3b7b5;border:1px solid #666;font-size:9.500px;line-height:18px;color:#333;border-radius:2px;display:flex;align-items:center;justify-content:center}
.tr svg{width:12px;height:10px;flex:none}
.t-param{display:flex;align-items:center;padding:7px 0 0 5px;height:29px}
.t-param svg{width:24px;height:24px}
.t-param div{width:72px;font:10.300px/11px "Open Sans",sans-serif;margin-left:-3px;color:#222}
.t-param span{display:block;background:#8f9190;padding-left:3px;white-space:nowrap;height:11px}
.t-param span+span{background:#2fa183;color:#0a3a2d}
.t-dots{padding:9px 0 0 14px}.t-dots i{display:block;width:8px;height:8px;border-radius:4px;background:#888;margin-bottom:16px;box-shadow:-1px 7px 0 -2px #666}
.t-fx{width:74px;background:#262626;padding:7px 0 0 6px}
.t-fx span{display:block;width:64px;height:16px;border-radius:2px;background:#8a8b8a;color:#1d1d1d;font-size:10.500px;line-height:15px;text-align:center}
.t-meter{width:18px;margin-top:2px;border-right:2px solid #c22048;background:linear-gradient(#0000 64px,#222 64px 88px,#0000 88px),repeating-linear-gradient(90deg,#3f371f 0 4px,#2f3f1f 4px 6px,#4a2f1f 6px 8px)}
.arrange{flex:1;min-width:0;position:relative;padding-top:26px}
.regions{height:24px;background:#3c3c3c;margin-right:5px}
.regions b{display:block;margin-left:10px;width:16px;height:16px;position:relative;top:3px;border-radius:7px;background:#a50f0f;border:1px solid #e04a4a;color:#fdd;font:10.500px/14px "Liberation Sans",sans-serif;text-align:center}
.ruler{height:87px;padding-top:42px;display:flex;overflow:hidden;color:#a0a0a0;background:repeating-linear-gradient(90deg,#aaa 0 1px,#0000 1px 15.450px) 0 76px/100% 11px no-repeat}
.ruler div{width:247.200px;flex:none;border-left:1px solid #999;padding-left:4px}
.ruler .last{width:66px}
.ruler p{font-size:13.200px;line-height:19px;width:48px;white-space:nowrap}
.ruler p+p{font-size:12.100px;line-height:16px;border-top:1px solid #999}
.lanes{display:flex;height:765px}
.lane-wrap{width:1774px}
.lane{height:154px;padding-top:1px;background:repeating-linear-gradient(90deg,#2e2e2e 0 1px,#0000 1px 15.450px),#505050}
.lane.low{height:611px;background:repeating-linear-gradient(90deg,#333 0 1px,#0000 1px 15.450px),#424242;border-top:1px solid #585858}
.item-h{display:flex;height:15px;align-items:center;color:#ddd;font-size:11px;padding-left:13px}
.item-h svg{width:16px;height:16px}.item-h b{background:#888;color:#333;margin-left:2px;width:15px;height:15px;line-height:15px;text-align:center}.item-h b+b{margin-right:6px}
.item{width:117px;height:56px;border-top:3px solid #fff;border-left:1px dashed #fff;background:repeating-linear-gradient(90deg,#0000 0 14.450px,#555 14.450px 15.450px),#cdcdcd}
.item.two{margin-top:24px;border-top:0}
.a-scroll{flex:1;display:flex;flex-direction:column;align-items:center;padding-top:2px}
.a-scroll svg{width:16px;height:16px}.a-scroll div{width:13px;height:690px;border-radius:4px;background:#5a5a5a;margin:7px 0 6px}
.mark-red{position:absolute;left:10px;top:44px;width:1px;bottom:0;background:#8c1717}
.mark-cur{position:absolute;left:761px;top:72px;width:22px;height:720px}
.dock{height:446px;border-top:1px solid #555;display:grid;grid-template:22px 41px 364px 18px/317px 1fr;}
.d-info{font-size:12px;line-height:22px;color:#8c8c8c;padding-left:2px;white-space:nowrap}
.d-right{grid-row:1/3;grid-column:2;display:flex;align-items:center;justify-content:flex-end;padding:17px 25px 0 0;color:#999}
.transport{grid-row:2;grid-column:1;width:317px;height:41px}
.pos{font:bold 23px "Open Sans",sans-serif;fill:#c4c4c4}
.global{width:46px;height:35px;background:#222;border-radius:5px;font-size:9px;text-align:right;padding:2px 8px 0 0;color:#bbb}
.global b{display:block;line-height:13px}
.global svg{width:20px;height:14px;display:block;margin-left:auto}.rk{width:34px;height:34px;margin:0 20px 0 8px}.rate{font-size:10.500px;text-align:right}.rate span{display:block;line-height:17px}
.mixer{grid-row:3;grid-column:1/3;display:flex}
.master{width:100px;padding-left:6px}
.m-pan{height:46px;display:flex;flex-direction:column;align-items:center;color:#d0d0d0;font-size:11.500px;line-height:16px;padding:3px 6px 0 0}.m-pan svg{width:20px;height:20px;flex:none}
.m-box{width:94px;height:318px;background:#262626;color:#9a9a9a;font-size:11px;overflow:hidden}
.m-db{text-align:center;line-height:20px}
.m-cols{display:flex;height:263px;color:#6a6a6a}
.scale{width:17px;padding-top:20px}.scale span,.bar>span{display:block;line-height:23.150px;height:23.150px}
.scale.r{width:18px;text-align:right}
.bar{width:36px;background:#3f371f;text-align:center;color:#857d62}
.bar p{height:24px;background:#ff0a50;color:#ddd;display:flex;gap:5px;line-height:26px;margin-bottom:11px;font-size:11px}
.bar p span:first-child{margin-left:-14px}
.fader{width:22px;height:262px;margin:-15px 0 0 0;align-self:center;overflow:visible}
.m-rms{display:flex;gap:10px;padding-left:6px;color:#26b486;font-weight:600;line-height:18px;font-size:11px}
.m-name{color:#ddd;text-align:center;line-height:14px;font-size:12px}
.m-btns{width:32px;display:flex;flex-direction:column;align-items:center;padding:7px 0 0 8px;color:#bbb;font-size:10px;letter-spacing:-.4px}
.m-btns b{width:20px;height:18px;line-height:17px;text-align:center;font-weight:400;background:#262626;border:1px solid #111;font-size:11px;overflow:hidden;flex:none}
.m-btns .g{background:#777;color:#444}.m-btns span{line-height:18px;font-size:9.500px}
.m-btns .m{color:#d8565f;height:19px}.m-btns .s{color:#e0d050;height:19px;margin-bottom:7px}.m-btns svg{width:20px;height:18px;flex:none}
.m-btns .f{background:#555;color:#ddd;margin-top:4px}.m-btns .f2{background:#777;color:#222}.m-btns .tr2{margin-top:8px}.m-btns .i{font-weight:700;margin-top:2px;color:#eee}
.chan{width:185px;display:flex;flex-direction:column;background:#242424}
.c-top{height:80px;background:#9da2a0;padding:6px 0 0 5px;color:#eee;font-size:11.500px}
.c-in{height:20px;background:#747c79;line-height:20px;padding-left:5px;margin-bottom:5px}
.c-mon{width:40px;height:19px;background:#747c79;border-radius:3px 9px 9px 3px;padding-left:8px;line-height:18px}.c-mon i{display:inline-block;width:15px;height:15px;line-height:14px;border-radius:8px;background:#a0a5a3;text-align:center;margin-left:3px}
.c-top svg{display:block;width:20px;height:20px;margin:3px 0 0 91px}
.c-mid{height:240px;display:flex}
.c-meter{width:152px;padding:6px 0 0 4px;margin-right:4px}
.pk{height:19px;background:#ff0a50;color:#ffd5e0;text-align:center;font-size:11px;line-height:19px}
.br{height:185px;background:#3f371f;margin:0 10px 0 9px}
.c-meter svg{display:block;width:12px;height:14px;margin:7px 0 0 67px}
.c-fader{width:22px;height:220px;margin-top:15px}
.c-name{height:24px;background:#c1c5c4;color:#222;text-align:center;line-height:25px;font-size:13px;padding-left:26px}
.c-num{height:20px;background:#7f8885;color:#ddd;text-align:center;line-height:19px;padding-left:24px;font-size:12px}
.tabs{grid-row:4;grid-column:1/3;background:#3a3a3a;display:flex;color:#a5a5a5;font-size:12.600px;line-height:17px;overflow:hidden;letter-spacing:-.3px}
.tabs em{width:13px;color:#fff;padding-left:3px}
.tabs span{padding:0 11px 0 4px;margin-right:5px;white-space:nowrap}
.tabs .cur{background:#8e9794;color:#1c1c1c;font-weight:600;clip-path:polygon(0 0,100% 0,90% 100%,6% 100%);padding-right:16px}

/* shared dialog parts */
.win{position:absolute;background:#f0f0f0;font:13.400px/16px "Liberation Sans",sans-serif;color:#111;box-shadow:0 5px 16px #0007;overflow:hidden;white-space:nowrap}
.win header{font-family:"Open Sans",sans-serif;background:#fff;display:flex;align-items:center}
.btn{display:block;background:#e1e1e1;border:1px solid #9f9f9f;color:#111;text-align:center;flex:none}
.btn.off{background:#cbcbcb;border-color:#c2c2c2;color:#8c8c8c}
.row{display:flex;align-items:center;height:24px}
.combo{height:24px;background:#e2e2e2;border:1px solid #a8a8a8;display:flex;align-items:center;justify-content:space-between;padding:0 4px;flex:none}
.combo svg{width:11px;height:7px;color:#555;margin-left:auto}
.in{height:24px;border:1px solid #c6c6c6;line-height:22px;padding-left:3px;color:#858585;flex:none;overflow:hidden}
.in.live{background:#fff;border-color:#777;color:#111}
.cb{display:inline-block;width:15px;height:15px;border:1px solid #222;background:#fff;flex:none}
.cb.on{position:relative}
.cb.on::after{content:"";position:absolute;left:2px;top:2px;width:9px;height:5px;border:solid #222;border-width:0 0 1.500px 1.500px;transform:rotate(-48deg)}
.cb.off{border-color:#ccc}
.g{color:#858585}
fieldset{border:1px solid #dcdcdc;margin:0;padding:0;min-width:0}
legend{padding:0 2px;margin-left:7px;line-height:16px;height:16px}
.ghost{background:#e6e6e6;color:#fff;text-align:center}

/* parameter modulation */
.pmod{left:2146px;top:351px;width:454px;height:439px}
.pmod header{height:31px;color:#9a9a9a;font-size:14px;padding-left:4px}
.pmod .ghost{margin-left:auto;margin-right:1px;width:25px;height:25px}
.pr{display:flex;align-items:center;height:16px;padding-left:16px}.pr .cb{margin-right:4px}
.p1{margin-top:14px}.slider{width:431px;height:25px;border-radius:12px;background:#c8c8c8;margin:7px 0 0 16px;padding:10px}
.slider i{display:block;height:5px;border-radius:3px;background:#5a5a5a}
.p3{margin-top:11px}.grn{width:200px;height:10px;background:#0cb324;margin-left:13px}
.p4{margin-top:8px}
.pmod fieldset{margin:11px 6px 0 12px;height:247px}.pmod legend{margin-left:2px;padding-right:11px;display:flex;gap:4px;align-items:center}
.pmod p{height:16px;padding-left:9px;margin-top:10px}.pmod .s2{margin-top:20px}.pmod .s3{margin-top:16px}.pmod .s4{margin-top:18px}.pmod .s5{margin-top:14px}
.p6{margin-top:11px}

/* render settings */
.rdlg{left:2705px;top:228px;width:672px;height:834px;padding-left:15px}
.rdlg header{height:31px;margin-left:-15px;padding-left:3px;color:#8c8c8c;font-size:14.300px}
.rdlg header .i20{margin-right:6px}.rdlg header .x{width:12px;height:12px;margin:0 15px 0 auto}
.r-src{margin-top:14px}.r-src span{width:55px}.r-src .combo{width:239px}.r-src .bd{margin-left:9px;width:62px}.r-src .c2{width:189px}
.r-src .btn{width:79px;height:22px;margin:2px 0 0 8px}
.rdlg fieldset{width:643px}
.f-time{margin-top:6px;height:56px}.f-time .row{margin-top:11px;color:#9b9b9b;padding-left:8px}
.f-time .w1{width:42px}.w2{width:79px}.w3{margin-left:9px;width:40px}.w4{width:83px}.w5{margin-left:8px;width:55px}.w6{width:79px}
.f-time .cb{margin:-6px 0 0 70px}.tail{color:#111;margin:-6px 0 0 4px;width:40px}.w7{width:61px;margin-top:-6px}.ms{color:#111;margin:-6px 0 0 9px}
.f-out{margin-top:6px;height:118px}.f-out .row{margin-top:8px;padding-left:14px}.f-out .row:nth-child(2){margin-top:5px}
.f-out .row span{width:72px}.f-out .in{width:450px}.f-out .btn{width:86px;height:24px;margin-left:7px}.f-out .end{text-align:right;padding-right:2px}
.f-opt{margin-top:5px;height:241px}
.o1{margin-top:5px;justify-content:flex-end;padding-right:12px}.o1 .a{width:250px;margin-right:50px}.o1 .b{width:169px}
.o2{height:16px;margin-top:13px;padding-left:405px}.o2 .cb{margin-right:4px}
.o3{margin-top:11px;justify-content:flex-end;padding-right:12px}.o3 .combo{width:200px;margin-right:14px}.o3 .btn{width:168px;height:24px}
.o4,.o5{height:16px;margin-top:9px;justify-content:flex-end}.o5{margin-top:6px}
.o4 span:first-child{margin-right:62px}.o5 span:first-child{margin-right:20px}.o4 .cb,.o5 .cb{margin-right:4px}.o4 .g,.o5 .g{width:142px}
.o6,.o7{height:16px;justify-content:flex-end;margin-top:11px;padding-right:118px}.o7{margin-top:5px;padding-right:131px}
.o8{margin-top:7px;justify-content:flex-end;padding-right:12px}.o8 .btn{width:94px;height:24px;margin-left:39px}
.fmt{margin-top:30px;height:142px;width:641px;border:1px solid #fff;outline:1px solid #e2e2e2;display:flex;flex-direction:column;align-items:flex-end;padding-top:10px;padding-right:142px}
.fmt .combo{width:300px}.fmt .b{margin:8px -37px 0 0;width:270px;padding-left:105px}
.fmt p{margin:11px 53px 0 0}.fmt .q{margin:10px 80px 0 0}
.rdlg>p{text-align:right;height:16px}.rdlg .l1{margin-top:15px;padding-right:42px}.rdlg .l2{margin-top:8px;padding-right:65px}.rdlg .l3{margin-top:7px;padding-right:123px}
.acts{height:26px;margin-top:10px;justify-content:flex-end;padding-right:15px;gap:10px}.acts .btn{height:26px}
.a1{margin-top:12px}.a1 .btn{width:158px}.a1 .btn:first-child{width:170px;padding-left:28px}
.a2 .btn{width:84px}.a2 .off{width:118px}

/* render progress */
.prog{left:2237px;top:424px;width:891px;height:973px;padding-left:14px;border:1px solid #555;box-shadow:0 6px 22px #0009}
.prog header{height:36px;margin-left:-14px;padding-left:8px;font-size:14.300px}
.prog header .i20{margin-right:7px}.prog header div{margin-left:auto;display:flex;gap:46px;margin-right:24px}.prog header div svg{width:12px;height:12px}.prog .dis{color:#ccc}
.prog fieldset{width:862px}
.prog .g1{margin-top:14px;height:84px;color:#111}.prog .g2{margin-top:12px;height:735px}
.path1{height:24px;width:826px;margin:6px 0 0 11px;border:1px solid #2274b8;padding:3px 0 0 2px;box-shadow:0 0 0 1px #d5ecfa}
.prog mark{background:#0d78d6;color:#fff;font-size:12.800px;display:inline-block}
.prog p{text-align:center;margin-top:7px;padding-right:12px;font-size:13px}
.pbar{margin:10px 0 0 25px;width:812px;height:16px;border:1px solid #b5b5b5;background:#e3e3e3}.pbar i{display:block;width:102px;height:14px;background:#06b025}
.prog .g2 p{margin-top:13px;display:flex;justify-content:center;gap:14px}
.meters{display:flex;align-items:center;margin-top:11px}.meters label{width:182px;text-align:right;font-size:13px}
#meters{width:662px;height:640px;margin-left:7px;background:linear-gradient(90deg,#00c2be 0,#00ccb9 35%,#00dcb0 62%,#00e0a8 70%,#00ff90 84%,#00ff90 603px,#b92800 603px);overflow:hidden;font-size:12.200px}
.mrow{height:10px;line-height:11px;display:grid;grid-template-columns:30px repeat(9,58.300px) 1fr;text-align:right;color:#fff;text-shadow:1px 1px 0 #000}
.mrow b{font-weight:400;padding-right:5px;text-shadow:none}
.btns{display:flex;flex-direction:column;align-items:flex-end;gap:7px;margin:22px 14px 0 0}.btns .btn{width:126px;height:26px}

/* plug-in host */
.fxwin{left:2900px;top:325px;width:1452px;height:754px;background:#f0f0f0}
.fw-head{height:61px;background:#fff;display:flex;justify-content:flex-end;align-items:flex-start;padding-top:9px}
.fpin{width:14px;height:18px;margin-right:40px}.fw-head .ghost{width:26px;height:25px}
.fw-r1{display:flex;margin-top:5px;height:24px}.fw-r1 .box{width:1418px;background:#fff;border:1px solid #777}.fw-r1 .btn{width:24px;height:22px;margin:1px 0 0 7px;font-size:10px}
.fw-r2{display:flex;height:24px;margin-top:7px}.fw-r2 .combo{width:1153px}
.fw-r2 .btn{height:24px;line-height:22px}.add{width:21px;margin-left:8px}.par{width:58px;margin-left:7px}.pins{width:98px;margin-left:6px}.ui{width:32px;margin-left:6px}
.dial{width:25px;height:25px;margin-left:4px}.fw-r2 .cb{margin:4px 0 0 6px}
.plug{margin:7px 0 0 377px;width:1072px;height:624px;border:2px solid #aab1b5;color:#fff;font:15.100px/18px "DejaVu Sans",sans-serif;background:linear-gradient(#1b3241,#10212b 10%,#041319 30%,#021016 62%,#0b1c25 80%,#1b3545)}
.plug .pl-head{height:38px;background:linear-gradient(90deg,#051215,#0c2029 35%,#1b3342 80%);border-bottom:2px solid #aab1b5;border-radius:5px;font-family:"DejaVu Sans",sans-serif;align-items:flex-start}
.pl-head h1{width:279px;text-align:right;font-size:18.400px;line-height:37px;color:#8a00f5}.pl-head h1 span{color:#fff}
.pl-sub{font-size:12.380px;line-height:40px;margin-left:17px}.pl-ver{font-size:11.560px;line-height:52px;margin-left:24px}
.pl-body{display:flex;padding-left:7px}
.plug b{font-weight:700}
.panel{border:1px solid #44575f;background:#1a282c99}
.pl-left{width:490px}
.pl-left i,.pl-right .side{border:1px solid #46575f}
.pl-ds{height:32px;display:flex;align-items:center;padding-top:12px}
.pl-ds b{width:149px;text-align:right;font-size:15.400px}.pl-ds span{font-size:11.430px;margin-left:10px;padding-top:2px}
.path{height:34px;display:flex;align-items:center}
.path div{width:446px;height:25px;border:1px solid #9aa;border-radius:3px;display:flex;align-items:center;justify-content:flex-end;font-size:12.060px;padding-right:15px}
.path svg{width:18px;height:9px;margin-left:15px}
.path button{width:38px;height:25px;border:1px solid #ccc;border-radius:0 13px 13px 0;background:none;color:#ddd}
.info{margin-top:1px;height:151px;display:flex;justify-content:space-between}
.in-l{display:grid;grid-template-columns:159px 74px;grid-auto-rows:27.300px;padding-top:6px;align-items:center;text-align:right}
.in-l b{padding-right:10px}.in-l .e1{padding-right:6px}.in-l .e2{padding-right:30px}.in-l .e3{padding-right:53px}.in-l .e4{padding-right:41px}
.in-l i,.in-r i{height:25px;line-height:23px;text-align:left;padding-left:6px}
.in-r{width:252px}.in-r1,.in-r2{display:grid;grid-template-columns:164px 74px;grid-auto-rows:27.300px;align-items:center;padding:6px 0 0 6px}
.in-r2{height:61px;border:1px solid #44575f;margin-top:1px;padding:4px 0 0 5px;grid-auto-rows:28px;background:#25343a66}
.in-r2 b{letter-spacing:-.1px}.pl-left .in-r2 i{font-size:12px;border-color:#aab;border-radius:3px;display:flex;align-items:center;justify-content:space-between;padding-right:3px}.in-r2 svg{width:15px;height:8px}.in-r2 .off{color:#3a474c;background:#07121a}.in-r2 .off svg{color:#ccc}
.xyz{display:grid;grid-template-columns:repeat(3,61px);column-gap:9px;text-align:center;padding-left:105px;grid-template-rows:24px 27px}
.xyz b{line-height:23px;font-size:14.500px}.pl-left .xyz i{line-height:25px;color:#7d8a8f;background:#22313766;border-color:#66767c;height:27px}
.src{margin-top:8px;height:54px}
.tlp{font-size:15.450px;line-height:31px;height:27px;padding-left:124px}
.tgt{height:59px;display:flex}.tgt .xyz{grid-template-rows:28px 27px;width:312px}.tgt .xyz b,.idx b,.osc b{line-height:28px}
.pl-left .xyz .hot{color:#fff;border-color:#9aa;border-bottom:4px solid #2c6076;line-height:23px}.pl-left .xyz .dim{background:#4b5f65}
.idx,.osc{border-left:1px solid #44575f;text-align:center;font-size:14.500px;width:88px}
.idx i{display:block;width:60px;height:26px;line-height:24px;margin:0 0 0 12px;text-align:left;padding-left:6px}.osc i{display:block;width:53px;height:26px;line-height:29px;margin:0 0 0 17px;font-size:14px}
.time{height:32px;margin-top:7px;display:flex;align-items:center;font-size:15.200px}.time b{width:198px;text-align:right}.time i{width:211px;height:25px;line-height:23px;margin-left:5px;text-align:center;color:#7d8a8f}
.rot{font-size:15.400px;line-height:24px;height:23px;width:428px;text-align:right;white-space:nowrap}
.rotp{height:144px;display:flex;background:linear-gradient(#14222888,#1b354588)}
.r-l{width:218px;border-right:2px solid #44575f;text-align:right;padding-top:9px}
.r-l b{display:block;padding-right:35px}.r-l svg{width:20px;height:20px;display:block;margin:10px 99px 0 auto}
.r-l p{font:bold 11.900px/20px "DejaVu Sans",sans-serif;margin-top:11px}.r-l p span{display:block;padding-right:18px}.r-l .n2{padding-right:21px}.r-l .n3{padding-right:28px}
.r-r{display:flex;padding-left:16px}.r-r>div{width:79px;text-align:center;white-space:nowrap}
.r-r p{font-size:10.800px;line-height:18px;margin:8px -5px 0 0;text-align:left;padding-left:4px}.r-r p b{font-size:12px}
.r-r svg{width:64px;height:64px;display:block;margin:0 0 0 7px}.pl-left .r-r i{display:block;width:73px;height:19px;line-height:17px;margin-left:5px;font-size:14px;border-color:#8a979c}
.r-r span{display:flex;align-items:center;justify-content:center;gap:5px;margin-top:8px;padding-right:1px}.r-r u{width:16px;height:16px;border-radius:8px;border:2px solid #555;background:#222d33}
.pl-right{width:550px;margin-left:9px}
.cv-head{height:32px;display:flex;justify-content:flex-end;padding-right:2px}.cv-head h2{font-size:15.500px;line-height:44px;margin-right:75px}
.pl-right .side{width:114px;height:20px;border-radius:3px;margin-top:7px;font-size:13.390px;line-height:19px;padding-left:6px;border-color:#8a979c}.side svg{width:17px;height:8px;margin-left:10px}
.coord{height:540px;background:linear-gradient(#1d2e35,#132226 15%,#122125 78%,#243b4a)}.coord svg{width:550px;height:540px;display:block;margin:-1px}
.ax text{font:12px "DejaVu Sans",sans-serif;fill:#8f9da1}.ax .lg{font-size:13.500px}.ax .z{fill:#4fa0a6}.ax .wh{fill:#fff;font-size:12px}
```
FILE: script.js
```js
// directory listing: number, day in January, time, size in KB
const files = [[156,17,'09:48',825],[155,17,'09:45',793],[154,17,'09:44',793],[153,17,'09:43',791],[152,17,'09:41',816],[151,17,'09:40',816],[150,17,'09:39',832],[149,17,'09:39',832],[148,17,'09:39',827],[147,17,'09:37',824],[146,17,'09:34',824],[145,17,'09:34',824],[144,17,'09:32',822],[143,16,'18:15',794],[142,16,'18:14',793],[141,16,'18:13',797],[140,16,'18:13',823],[139,16,'18:11',824],[138,16,'18:11',826],[137,16,'18:09',797],[136,16,'18:09',797],[135,16,'18:09',797],[134,16,'18:09',813],[133,16,'18:07',818],[132,16,'18:06',814],[131,16,'18:04',795],[130,16,'18:03',795],[129,16,'18:03',794],[128,16,'18:02',840],[127,16,'18:01',838],[126,16,'18:01',833],[125,16,'17:36',694],[124,16,'17:36',693],[123,16,'17:31',693],[122,16,'17:26',717],[121,16,'17:26',720],[120,16,'17:25',720]];
document.getElementById('rows').innerHTML = files.map(([n, d, t, s], i) =>
  `<div class="file${i ? '' : ' sel'}"><svg><use href="#irfan"/></svg><span>Screenshot (${n}).png</span><span>${d}-Jan-25 ${t}</span><span>IrfanView PNG File</span><span>${s} KB</span></div>`).join('');

// per-channel peak values of the 64 rendered channels
const peaks = '6.5 7.1 6.9 6.3 7.0 7.4 6.1 6.0 7.0 8.3 6.5 6.3 7.3 6.5 8.0 6.6 7.9 7.1 6.9 6.5 6.6 6.4 8.1 6.6 6.9 7.2 6.4 6.8 7.0 6.3 6.7 7.1 6.5 6.2 7.3 6.9 6.4 6.6 7.0 6.8 6.2 6.8 7.1 7.1 6.4 6.1 7.4 7.7 6.5 6.9 6.4 6.4 5.9 6.3 6.7 6.4 7.1 6.2 7.3 6.8 6.4 6.1 7.6 5.8'.split(' ');
const marks = [60,54,48,42,36,30,24,18,12,6].map(v => `<span>-${v}</span>`).join('');
document.getElementById('meters').innerHTML = peaks.map(p => `<div class="mrow">${marks}<b>+${p}</b></div>`).join('');
```
